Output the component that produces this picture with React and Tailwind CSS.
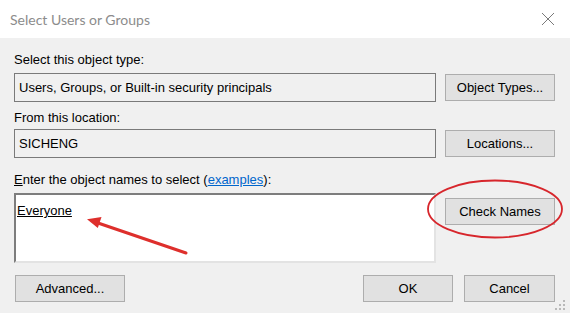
import React from 'react';

const Btn = ({ children, className = '' }) => (
  <button
    className={`h-[27px] bg-[#e1e1e1] border border-[#adadad] text-[13px] text-black leading-4 ${className}`}
  >
    {children}
  </button>
);

const Annotations = () => (
  <svg className="absolute inset-0 pointer-events-none" width="570" height="313" viewBox="0 0 570 313">
    <ellipse cx="495" cy="209" rx="67" ry="28.5" fill="none" stroke="#d7262c" strokeWidth="1.8" />
    <line x1="186" y1="253" x2="98" y2="223" stroke="#de2f2c" strokeWidth="3" strokeLinecap="round" />
    <polygon points="87,219.3 101.5,217 97.8,228" fill="#de2f2c" />
    <g fill="#b9b9b9">
      <rect x="563" y="300" width="2" height="2" />
      <rect x="559" y="304" width="2" height="2" />
      <rect x="563" y="304" width="2" height="2" />
      <rect x="555" y="308" width="2" height="2" />
      <rect x="559" y="308" width="2" height="2" />
      <rect x="563" y="308" width="2" height="2" />
    </g>
  </svg>
);

export default function App() {
  return (
    <div
      className="relative w-[570px] h-[313px] flex flex-col bg-[#f0f0f0] overflow-hidden"
      style={{ fontFamily: '"Liberation Sans", Arial, sans-serif' }}
    >
      <div className="h-[38px] bg-white flex items-center justify-between pl-[10px] pr-[15px]">
        <span className="text-[14px] text-[#8c8c8c]" style={{ fontFamily: 'Lato, "Liberation Sans", sans-serif' }}>
          Select Users or Groups
        </span>
        <svg width="14" height="14" viewBox="0 0 14 14">
          <path d="M1 1 L13 13 M13 1 L1 13" stroke="#7a7a7a" strokeWidth="1" />
        </svg>
      </div>

      <div className="flex-1 flex flex-col pt-[14px] pl-[14px] pr-[15px] text-[13px] leading-4 text-black">
        <div>Select this object type:</div>
        <div className="mt-[5px] flex items-center gap-[9px]">
          <div className="w-[422px] h-[29px] bg-[#f0f0f0] border border-[#7a7a7a] flex items-center pl-[4px]">
            Users, Groups, or Built-in security principals
          </div>
          <Btn className="w-[110px]">Object Types...</Btn>
        </div>

        <div className="mt-[8px]">From this location:</div>
        <div className="mt-[3px] flex items-center gap-[9px]">
          <div className="w-[422px] h-[29px] bg-[#f0f0f0] border border-[#7a7a7a] flex items-center pl-[4px]">
            SICHENG
          </div>
          <Btn className="w-[110px]">Locations...</Btn>
        </div>

        <div className="mt-[14px]">
          <span className="underline">E</span>nter the object names to select (
          <span className="text-[#0066cc] underline">examples</span>):
        </div>
        <div className="mt-[5px] flex items-start gap-[9px]">
          <div className="w-[422px] h-[70px] bg-white border-2 border-t-[#7d7d7d] border-l-[#7d7d7d] border-r-[#e3e3e3] border-b-[#e3e3e3] pt-[8px] pl-[1px]">
            <span className="underline">Everyone</span>
          </div>
          <Btn className="w-[110px] mt-[5px]">Check Names</Btn>
        </div>

        <div className="mt-[12px] flex items-center">
          <Btn className="w-[110px] ml-[1px]">Advanced...</Btn>
          <div className="ml-auto flex gap-[11px]">
            <Btn className="w-[90px]">OK</Btn>
            <Btn className="w-[91px]">Cancel</Btn>
          </div>
        </div>
      </div>

      <Annotations />
    </div>
  );
}
